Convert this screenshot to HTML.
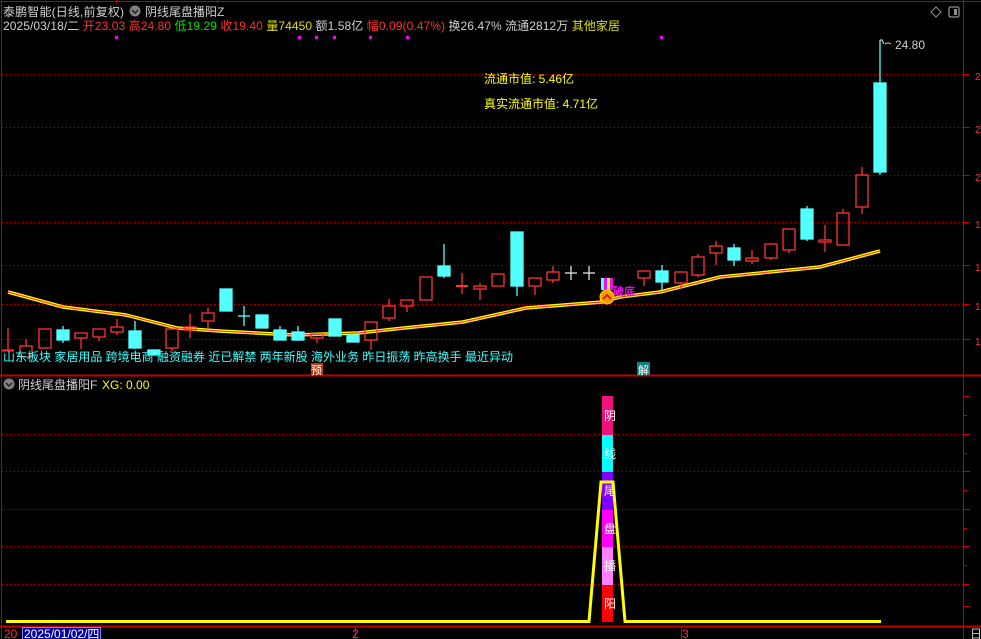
<!DOCTYPE html>
<html><head><meta charset="utf-8">
<style>
html,body{margin:0;padding:0;background:#000;width:981px;height:639px;overflow:hidden}
svg{display:block}
text{font-family:"Liberation Sans","Noto Sans CJK SC",sans-serif;font-size:12px}
</style></head><body>
<svg width="981" height="639" viewBox="0 0 981 639" xmlns="http://www.w3.org/2000/svg">
<rect width="981" height="639" fill="#000"/>
<g stroke="#c00000" stroke-width="1" fill="none">
<line x1="0" y1="1.5" x2="981" y2="1.5"/>
<line x1="1.5" y1="0" x2="1.5" y2="639"/>
<line x1="963.5" y1="0" x2="963.5" y2="639"/>
<line x1="0" y1="375.5" x2="981" y2="375.5" stroke-width="2"/>
<line x1="0" y1="626.5" x2="981" y2="626.5" stroke-width="2"/>
</g>
<g stroke="#c00000" stroke-width="1" stroke-dasharray="1,3">
<line x1="2" y1="74.5" x2="963" y2="74.5"/>
<line x1="2" y1="127.5" x2="963" y2="127.5"/>
<line x1="2" y1="175.5" x2="963" y2="175.5"/>
<line x1="2" y1="222.5" x2="963" y2="222.5"/>
<line x1="2" y1="265.5" x2="963" y2="265.5"/>
<line x1="2" y1="304.5" x2="963" y2="304.5"/>
<line x1="2" y1="339.5" x2="963" y2="339.5"/>
<line x1="2" y1="434.5" x2="963" y2="434.5"/>
<line x1="2" y1="471.5" x2="963" y2="471.5"/>
<line x1="2" y1="509.5" x2="963" y2="509.5"/>
<line x1="2" y1="546.5" x2="963" y2="546.5"/>
<line x1="2" y1="584.5" x2="963" y2="584.5"/>
</g>
<g stroke="#c00000" stroke-width="1">
<line x1="963" y1="74.5" x2="970" y2="74.5"/><line x1="963" y1="127.5" x2="970" y2="127.5"/>
<line x1="963" y1="175.5" x2="970" y2="175.5"/><line x1="963" y1="222.5" x2="970" y2="222.5"/>
<line x1="963" y1="265.5" x2="970" y2="265.5"/><line x1="963" y1="304.5" x2="970" y2="304.5"/>
<line x1="963" y1="339.5" x2="970" y2="339.5"/>
<line x1="963" y1="396.5" x2="970" y2="396.5"/><line x1="963" y1="415.5" x2="967" y2="415.5"/>
<line x1="963" y1="434.5" x2="970" y2="434.5"/><line x1="963" y1="453.5" x2="967" y2="453.5"/>
<line x1="963" y1="471.5" x2="970" y2="471.5"/><line x1="963" y1="490.5" x2="967" y2="490.5"/>
<line x1="963" y1="509.5" x2="970" y2="509.5"/><line x1="963" y1="528.5" x2="967" y2="528.5"/>
<line x1="963" y1="546.5" x2="970" y2="546.5"/><line x1="963" y1="565.5" x2="967" y2="565.5"/>
<line x1="963" y1="584.5" x2="970" y2="584.5"/><line x1="963" y1="606.5" x2="970" y2="606.5"/>
<line x1="116.5" y1="0" x2="116.5" y2="3"/><line x1="217.5" y1="0" x2="217.5" y2="3"/>
<line x1="355.5" y1="627" x2="355.5" y2="639"/><line x1="681.5" y1="627" x2="681.5" y2="639"/>
</g>
<g fill="#ff3030"><text x="975" y="80" style="font-size:10px">2</text><text x="975" y="133" style="font-size:10px">2</text><text x="975" y="181" style="font-size:10px">2</text><text x="975" y="228" style="font-size:10px">1</text><text x="975" y="271" style="font-size:10px">1</text><text x="975" y="310" style="font-size:10px">1</text><text x="975" y="345" style="font-size:10px">1</text></g>

<text x="3" y="16" fill="#d0d0d0" textLength="121">泰鹏智能(日线,前复权)</text>
<circle cx="135" cy="11" r="5.5" fill="#808080"/><path d="M132 10l3 3 3-3" stroke="#222" stroke-width="1.5" fill="none"/>
<text x="145" y="16" fill="#d0d0d0">阴线尾盘播阳Z</text>
<text x="3" y="30" fill="#d0d0d0" textLength="617">2025/03/18/二 <tspan fill="#ff3030">开23.03 高24.80</tspan> <tspan fill="#00e000">低19.29</tspan> <tspan fill="#ff3030">收19.40</tspan> <tspan fill="#e0e000">量74450</tspan> 额1.58亿 <tspan fill="#ff3030">幅0.09(0.47%)</tspan> 换26.47% 流通2812万 <tspan fill="#e0e000">其他家居</tspan></text>
<g fill="#ff00ff"><rect x="115" y="36" width="3" height="3"/><rect x="298" y="36" width="3" height="3"/><rect x="315" y="36" width="3" height="3"/><rect x="333" y="36" width="3" height="3"/><rect x="369" y="36" width="3" height="3"/><rect x="406" y="36" width="3" height="3"/><rect x="660" y="36" width="3" height="3"/></g>
<path d="M936 7l5 5-5 5-5-5z" stroke="#909090" fill="none"/>
<rect x="949" y="7" width="10" height="10" rx="1.5" stroke="#909090" fill="none" stroke-width="1.3"/><rect x="954" y="9" width="3" height="6" fill="#909090"/>

<text x="484" y="83" fill="#ffff00">流通市值: 5.46亿</text>
<text x="484" y="108" fill="#ffff00">真实流通市值: 4.71亿</text>
<text x="895" y="49" fill="#d0d0d0">24.80</text>
<path d="M880 40h3M882 40l2 4M885 44q3-2 6 0" stroke="#d0d0d0" fill="none"/>

<polyline points="8,292 63,307 126,315 177,328 219,331 295,335 358,333 404,328 463,322 526,308 602,302 620,297 660,292 720,277 820,267 880,251" stroke="#ffff00" stroke-width="3.5" fill="none"/>
<polyline points="8,292 63,307 126,315 177,328 219,331 295,335 358,333 404,328 463,322 526,308 602,302 620,297 660,292 720,277 820,267 880,251" stroke="#ff2020" stroke-width="1" fill="none"/>

<g stroke="#ff3333" stroke-width="1.3" fill="none">
<line x1="8" y1="328" x2="8" y2="350"/><line x1="2" y1="350.5" x2="14" y2="350.5" stroke-width="2"/>
<rect x="20" y="346" width="12" height="11"/><line x1="26" y1="339" x2="26" y2="346"/>
<rect x="39" y="329" width="12" height="19"/>
<rect x="75" y="333" width="12" height="5"/><line x1="81" y1="338" x2="81" y2="349"/>
<rect x="93" y="329" width="12" height="8"/><line x1="99" y1="337" x2="99" y2="341"/>
<rect x="111" y="327" width="12" height="5"/><line x1="117" y1="319" x2="117" y2="327"/><line x1="117" y1="332" x2="117" y2="335"/>
<rect x="166" y="329" width="12" height="19"/><line x1="172" y1="348" x2="172" y2="351"/>
<rect x="184" y="327" width="12" height="3"/><line x1="190" y1="314" x2="190" y2="327"/><line x1="190" y1="330" x2="190" y2="338"/>
<rect x="202" y="313" width="12" height="8"/><line x1="208" y1="308" x2="208" y2="313"/><line x1="208" y1="321" x2="208" y2="328"/>
<rect x="311" y="334" width="12" height="4"/><line x1="317" y1="338" x2="317" y2="343"/>
<rect x="365" y="322" width="12" height="18"/><line x1="371" y1="340" x2="371" y2="350"/>
<rect x="383" y="306" width="12" height="12"/><line x1="389" y1="299" x2="389" y2="306"/><line x1="389" y1="318" x2="389" y2="321"/>
<rect x="401" y="300" width="12" height="6"/><line x1="407" y1="306" x2="407" y2="312"/>
<rect x="420" y="277" width="12" height="23"/>
<line x1="462" y1="273" x2="462" y2="294"/><line x1="456" y1="286" x2="468" y2="286" stroke-width="2"/>
<rect x="474" y="286" width="12" height="3"/><line x1="480" y1="283" x2="480" y2="286"/><line x1="480" y1="289" x2="480" y2="300"/>
<rect x="492" y="274" width="12" height="12"/>
<rect x="529" y="278" width="12" height="8"/><line x1="535" y1="286" x2="535" y2="295"/>
<rect x="547" y="272" width="12" height="8"/><line x1="553" y1="266" x2="553" y2="272"/><line x1="553" y1="280" x2="553" y2="283"/>
<rect x="638" y="271" width="12" height="7"/><line x1="644" y1="278" x2="644" y2="286"/>
<rect x="675" y="272" width="12" height="11"/><line x1="681" y1="283" x2="681" y2="289"/>
<rect x="692" y="257" width="12" height="18"/><line x1="698" y1="254" x2="698" y2="257"/><line x1="698" y1="275" x2="698" y2="277"/>
<rect x="710" y="246" width="12" height="7"/><line x1="716" y1="241" x2="716" y2="246"/><line x1="716" y1="253" x2="716" y2="265"/>
<rect x="746" y="258" width="12" height="3"/><line x1="752" y1="250" x2="752" y2="258"/><line x1="752" y1="261" x2="752" y2="264"/>
<rect x="765" y="244" width="12" height="14"/><line x1="771" y1="258" x2="771" y2="260"/>
<rect x="783" y="229" width="12" height="21"/><line x1="789" y1="250" x2="789" y2="253"/>
<rect x="819" y="240" width="12" height="2"/><line x1="825" y1="225" x2="825" y2="240"/><line x1="825" y1="242" x2="825" y2="252"/>
<rect x="837" y="213" width="12" height="32"/><line x1="843" y1="209" x2="843" y2="213"/>
<rect x="856" y="175" width="12" height="32"/><line x1="862" y1="167" x2="862" y2="175"/><line x1="862" y1="207" x2="862" y2="214"/>
</g>
<g fill="#54ffff" stroke="#54ffff" stroke-width="1.3">
<rect x="57" y="330" width="12" height="10"/><line x1="63" y1="326" x2="63" y2="343"/>
<rect x="129" y="331" width="12" height="17"/><line x1="135" y1="321" x2="135" y2="349"/>
<rect x="148" y="350" width="12" height="5"/>
<rect x="220" y="289" width="12" height="22"/>
<line x1="244" y1="306" x2="244" y2="326"/><line x1="238" y1="316" x2="250" y2="316"/>
<rect x="256" y="315" width="12" height="13"/>
<rect x="274" y="330" width="12" height="10"/><line x1="280" y1="326" x2="280" y2="330"/>
<rect x="292" y="332" width="12" height="8"/><line x1="298" y1="326" x2="298" y2="341"/>
<rect x="329" y="319" width="12" height="17"/>
<rect x="347" y="335" width="12" height="7"/>
<rect x="438" y="266" width="12" height="10"/><line x1="444" y1="244" x2="444" y2="278"/>
<rect x="511" y="232" width="12" height="54"/><line x1="517" y1="286" x2="517" y2="296"/>
<rect x="656" y="271" width="12" height="11"/><line x1="662" y1="265" x2="662" y2="290"/>
<rect x="728" y="248" width="12" height="12"/><line x1="734" y1="244" x2="734" y2="266"/>
<rect x="801" y="209" width="12" height="30"/><line x1="807" y1="206" x2="807" y2="241"/>
<rect x="874" y="83" width="12" height="89"/><line x1="880" y1="40" x2="880" y2="175"/>
</g>
<g stroke="#e0e0e0" stroke-width="1.3">
<line x1="571" y1="266" x2="571" y2="280"/><line x1="565" y1="273" x2="577" y2="273"/>
<line x1="589" y1="266" x2="589" y2="280"/><line x1="583" y1="273" x2="595" y2="273"/>
</g>
<rect x="601" y="278" width="3" height="12" fill="#54ffff"/><rect x="604" y="278" width="3" height="12" fill="#ff00ff"/><rect x="607" y="278" width="3" height="12" fill="#ffff00"/><rect x="610" y="278" width="3" height="12" fill="#ff00ff"/>
<circle cx="607" cy="297" r="7" fill="#ff9900" stroke="#ffdd00"/><path d="M603 299l4-4 4 4" stroke="#c03000" stroke-width="2" fill="none"/>
<text x="613" y="295" fill="#ff00ff" style="font-size:11px;font-weight:bold">破底</text>

<text x="3" y="361" fill="#3cffff">山东板块 家居用品 跨境电商 融资融券 近已解禁 两年新股 海外业务 昨日振荡 昨高换手 最近异动</text>
<rect x="311" y="363" width="12" height="12" fill="#b83a10"/><text x="311" y="374" fill="#fff" style="font-size:11px">预</text>
<rect x="637" y="362" width="13" height="13" fill="#108080"/><text x="638" y="374" fill="#fff" style="font-size:11px">解</text>

<circle cx="9" cy="384" r="5.5" fill="#808080"/><path d="M6 383l3 3 3-3" stroke="#222" stroke-width="1.5" fill="none"/>
<text x="18" y="389" fill="#d0d0d0">阴线尾盘播阳F</text>
<text x="102" y="389" fill="#ffff00">XG: 0.00</text>

<rect x="602" y="396" width="11" height="39" fill="#f0117a"/>
<rect x="602" y="435" width="11" height="37" fill="#00ffff"/>
<rect x="602" y="472" width="11" height="38" fill="#8000ff"/>
<rect x="602" y="510" width="11" height="37" fill="#ff00ff"/>
<rect x="602" y="547" width="11" height="38" fill="#ff80ff"/>
<rect x="602" y="585" width="11" height="37" fill="#ff0000"/>
<g fill="#fff">
<text x="604" y="420">阴</text><text x="604" y="458">线</text>
<text x="604" y="495">尾</text><text x="604" y="533">盘</text>
<text x="604" y="570">播</text><text x="604" y="608">阳</text>
</g>
<polyline points="6,621.5 589,621.5 601,482 613,482 625,621.5 881,621.5" stroke="#ffff00" stroke-width="3" fill="none"/>

<text x="4" y="638" fill="#ff3030">20</text>
<rect x="22.5" y="627.5" width="78" height="12" fill="#0000a0" stroke="#8080ff"/>
<text x="24" y="638" fill="#fff">2025/01/02/四</text>
<text x="352" y="638" fill="#ff3030">2</text>
<text x="682" y="638" fill="#ff3030">3</text>
<text x="970" y="638" fill="#d0d0d0">日</text>
</svg>
</body></html>
